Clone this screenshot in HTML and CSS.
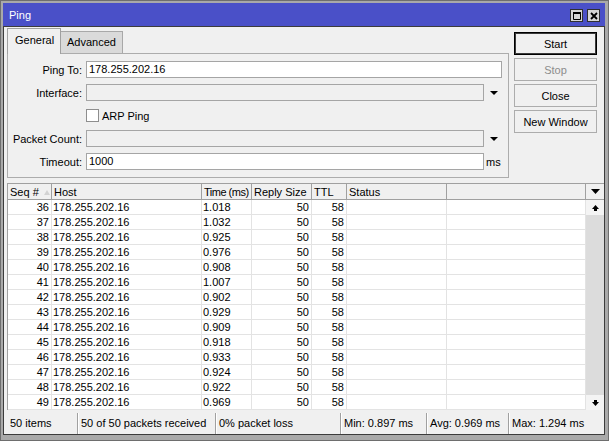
FILE: index.html
```html
<!DOCTYPE html>
<html>
<head>
<meta charset="utf-8">
<title>Ping</title>
<link rel="stylesheet" href="styles.css">
</head>
<body>
<div class="window">
  <div class="titlebar">
    <span class="title">Ping</span>
    <div class="tbtns">
      <span class="tbtn"><svg width="8" height="8" viewBox="0 0 8 8"><rect x="0" y="0" width="8" height="2" fill="#000"/><path d="M0.5 1.5V7.5H7.5V1.5" fill="none" stroke="#000"/></svg></span>
      <span class="tbtn"><svg width="8" height="8" viewBox="0 0 8 8"><path d="M1 1L7 7M7 1L1 7" stroke="#000" stroke-width="1.8" fill="none"/></svg></span>
    </div>
  </div>
  <div class="body">
    <div class="top">
      <div class="tabs-area">
        <div class="tabstrip">
          <div class="tab active">General</div>
          <div class="tab adv">Advanced</div>
        </div>
        <div class="panel">
          <div class="form">
            <span class="lbl">Ping To:</span>
            <div class="input span2">178.255.202.16</div>

            <span class="lbl">Interface:</span>
            <div class="input dis"></div>
            <span class="arrow"><svg width="8" height="4" viewBox="0 0 8 4"><path d="M0 0H8L4 4Z" fill="#000"/></svg></span>

            <span></span>
            <div class="check"><span class="cb"></span><span>ARP Ping</span></div>

            <span class="lbl">Packet Count:</span>
            <div class="input dis"></div>
            <span class="arrow"><svg width="8" height="4" viewBox="0 0 8 4"><path d="M0 0H8L4 4Z" fill="#000"/></svg></span>

            <span class="lbl">Timeout:</span>
            <div class="input">1000</div>
            <span class="suffix">ms</span>
          </div>
        </div>
      </div>
      <div class="buttons">
        <div class="btn def">Start</div>
        <div class="btn disabled">Stop</div>
        <div class="btn">Close</div>
        <div class="btn">New Window</div>
      </div>
    </div>

    <div class="list">
      <div class="thead">
        <div class="th">Seq # <svg class="sort" width="6" height="5" viewBox="0 0 6 5"><path d="M3 0L6 5H0Z" fill="#d2d2d2"/></svg></div>
        <div class="th">Host</div>
        <div class="th tight">Time (ms)</div>
        <div class="th">Reply Size</div>
        <div class="th">TTL</div>
        <div class="th">Status</div>
        <div class="th"></div>
        <div class="th menu"><svg width="9" height="5" viewBox="0 0 9 5"><path d="M0 0H9L4.5 5Z" fill="#000"/></svg></div>
      </div>
      <div class="tbody">
        <div class="rows">
          <div class="row"><div class="td r">36</div><div class="td">178.255.202.16</div><div class="td">1.018</div><div class="td r">50</div><div class="td r">58</div><div class="td"></div><div class="td"></div></div>
          <div class="row"><div class="td r">37</div><div class="td">178.255.202.16</div><div class="td">1.032</div><div class="td r">50</div><div class="td r">58</div><div class="td"></div><div class="td"></div></div>
          <div class="row"><div class="td r">38</div><div class="td">178.255.202.16</div><div class="td">0.925</div><div class="td r">50</div><div class="td r">58</div><div class="td"></div><div class="td"></div></div>
          <div class="row"><div class="td r">39</div><div class="td">178.255.202.16</div><div class="td">0.976</div><div class="td r">50</div><div class="td r">58</div><div class="td"></div><div class="td"></div></div>
          <div class="row"><div class="td r">40</div><div class="td">178.255.202.16</div><div class="td">0.908</div><div class="td r">50</div><div class="td r">58</div><div class="td"></div><div class="td"></div></div>
          <div class="row"><div class="td r">41</div><div class="td">178.255.202.16</div><div class="td">1.007</div><div class="td r">50</div><div class="td r">58</div><div class="td"></div><div class="td"></div></div>
          <div class="row"><div class="td r">42</div><div class="td">178.255.202.16</div><div class="td">0.902</div><div class="td r">50</div><div class="td r">58</div><div class="td"></div><div class="td"></div></div>
          <div class="row"><div class="td r">43</div><div class="td">178.255.202.16</div><div class="td">0.929</div><div class="td r">50</div><div class="td r">58</div><div class="td"></div><div class="td"></div></div>
          <div class="row"><div class="td r">44</div><div class="td">178.255.202.16</div><div class="td">0.909</div><div class="td r">50</div><div class="td r">58</div><div class="td"></div><div class="td"></div></div>
          <div class="row"><div class="td r">45</div><div class="td">178.255.202.16</div><div class="td">0.918</div><div class="td r">50</div><div class="td r">58</div><div class="td"></div><div class="td"></div></div>
          <div class="row"><div class="td r">46</div><div class="td">178.255.202.16</div><div class="td">0.933</div><div class="td r">50</div><div class="td r">58</div><div class="td"></div><div class="td"></div></div>
          <div class="row"><div class="td r">47</div><div class="td">178.255.202.16</div><div class="td">0.924</div><div class="td r">50</div><div class="td r">58</div><div class="td"></div><div class="td"></div></div>
          <div class="row"><div class="td r">48</div><div class="td">178.255.202.16</div><div class="td">0.922</div><div class="td r">50</div><div class="td r">58</div><div class="td"></div><div class="td"></div></div>
          <div class="row"><div class="td r">49</div><div class="td">178.255.202.16</div><div class="td">0.969</div><div class="td r">50</div><div class="td r">58</div><div class="td"></div><div class="td"></div></div>
        </div>
        <div class="vscroll">
          <div class="sbtn"><svg width="7" height="6" viewBox="0 0 7 6"><path d="M3.5 0L7 4H5V6H2V4H0Z" fill="#000"/></svg></div>
          <div class="track"></div>
          <div class="sbtn"><svg width="7" height="6" viewBox="0 0 7 6"><path d="M3.5 6L7 2H5V0H2V2H0Z" fill="#000"/></svg></div>
        </div>
      </div>
    </div>

    <div class="status">
      <div class="sec">50 items</div>
      <div class="sec">50 of 50 packets received</div>
      <div class="sec">0% packet loss</div>
      <div class="sec">Min: 0.897 ms</div>
      <div class="sec">Avg: 0.969 ms</div>
      <div class="sec">Max: 1.294 ms</div>
    </div>
  </div>
</div>
</body>
</html>
```
FILE: styles.css
```css
html, body {
  margin: 0;
  padding: 0;
}
body {
  font-family: "Liberation Sans", Arial, sans-serif;
  font-size: 11px;
  color: #000;
  background: #a9a9a9;
}
.window {
  width: 609px;
  height: 441px;
  box-sizing: border-box;
  border: 1px solid #6e6e6e;
  padding: 2px 3px 5px 2px;
  background: #a9a9a9;
  display: flex;
  flex-direction: column;
}
.titlebar {
  height: 23px;
  flex: none;
  background: #4a50c8;
  display: flex;
  align-items: flex-start;
  justify-content: space-between;
  padding: 0 5px 0 6px;
}
.title {
  color: #fff;
  margin-top: 6px;
  line-height: 13px;
}
.tbtns {
  display: flex;
  gap: 4px;
  margin-top: 6px;
}
.tbtn {
  width: 13px;
  height: 13px;
  box-sizing: border-box;
  border: 1px solid #303030;
  background: #d6d6d6;
  display: flex;
  align-items: center;
  justify-content: center;
}
.body {
  flex: 1;
  min-height: 0;
  border: 1px solid #3c3c3c;
  background: #f0f0f0;
  padding: 1px 0 0 3px;
  display: flex;
  flex-direction: column;
}
.top {
  height: 150px;
  flex: none;
  display: flex;
}
.tabs-area {
  width: 502px;
  display: flex;
  flex-direction: column;
}
.tabstrip {
  height: 25px;
  flex: none;
  display: flex;
  align-items: flex-end;
}
.tab {
  box-sizing: border-box;
  line-height: 13px;
  white-space: nowrap;
}
.tab.active {
  width: 54px;
  height: 26px;
  margin-bottom: -1px;
  border: 1px solid #a0a0a0;
  border-bottom: none;
  background: #f0f0f0;
  padding: 5px 0 0 7px;
  position: relative;
  z-index: 1;
}
.tab.adv {
  width: 62px;
  height: 22px;
  border: 1px solid #a8a8a8;
  border-left: none;
  border-bottom: none;
  background: #dadada;
  padding: 4px 0 0 6px;
}
.panel {
  flex: 1;
  border: 1px solid #acacac;
  background: #f0f0f0;
  padding: 7px 6px 0 0;
}
.form {
  display: grid;
  grid-template-columns: 78px 1fr 18px;
  grid-auto-rows: 17px;
  row-gap: 6px;
  align-items: center;
}
.lbl {
  text-align: right;
  padding-right: 4px;
  white-space: nowrap;
}
.input {
  height: 17px;
  box-sizing: border-box;
  border: 1px solid #a5a5a5;
  background: #fff;
  padding-left: 2px;
  line-height: 15px;
}
.input.span2 {
  grid-column: 2 / 4;
}
.input.dis {
  background: #f0f0f0;
}
.arrow {
  display: flex;
  justify-content: center;
  padding-left: 2px;
}
.suffix {
  padding-left: 2px;
}
.check {
  grid-column: 2 / 4;
  display: flex;
  align-items: center;
  gap: 3px;
}
.cb {
  width: 13px;
  height: 13px;
  box-sizing: border-box;
  border: 1px solid #8e8e8e;
  background: #fff;
}
.buttons {
  width: 83px;
  margin-left: 5px;
  margin-top: 4px;
  display: flex;
  flex-direction: column;
  gap: 3px;
}
.btn {
  height: 23px;
  box-sizing: border-box;
  border: 1px solid #acacac;
  background: #f0f0f0;
  display: flex;
  align-items: center;
  justify-content: center;
  white-space: nowrap;
}
.btn.def {
  border-color: #000;
  box-shadow: inset 0 0 0 1px #3a3a3a;
}
.btn.disabled {
  color: #8d8d8d;
}
.list {
  margin-top: 5px;
  height: 227px;
  flex: none;
  box-sizing: border-box;
  border-left: 1px solid #a0a0a0;
  border-top: 1px solid #a0a0a0;
  background: #fff;
  display: flex;
  flex-direction: column;
}
.thead {
  display: grid;
  grid-template-columns: 44px 150px 50px 60px 35px 100px 1fr 18px;
  height: 16px;
  flex: none;
  box-sizing: border-box;
  border-bottom: 1px solid #a0a0a0;
  background: #f0f0f0;
}
.th {
  border-right: 1px solid #a0a0a0;
  padding-left: 2px;
  line-height: 16px;
  white-space: nowrap;
  overflow: hidden;
}
.th.tight {
  letter-spacing: -0.5px;
}
.th .sort {
  margin-left: 2px;
  vertical-align: 1px;
}
.th.menu {
  border-right: none;
  padding-left: 0;
  display: flex;
  align-items: center;
  justify-content: center;
}
.tbody {
  flex: 1;
  min-height: 0;
  display: flex;
}
.rows {
  flex: 1;
}
.row {
  display: grid;
  grid-template-columns: 44px 150px 50px 60px 35px 100px 1fr;
  height: 15px;
  box-sizing: border-box;
  border-bottom: 1px solid #e3e3e3;
}
.td {
  border-right: 1px solid #e3e3e3;
  line-height: 15px;
  padding: 0 2px 0 1px;
  white-space: nowrap;
  overflow: hidden;
}
.td.r {
  text-align: right;
  padding: 0 2px 0 0;
}
.vscroll {
  width: 18px;
  display: flex;
  flex-direction: column;
  background: #dcdcdc;
}
.sbtn {
  height: 15px;
  flex: none;
  background: #f4f4f4;
  display: flex;
  align-items: center;
  justify-content: center;
}
.track {
  flex: 1;
  background: #dcdcdc;
}
.status {
  margin-top: 3px;
  height: 21px;
  flex: none;
  display: grid;
  grid-template-columns: 70px 138px 125px 86px 82px 1fr;
}
.sec {
  border-left: 1px solid #a0a0a0;
  box-shadow: inset 1px 0 0 #ffffff;
  padding-left: 3px;
  line-height: 21px;
  white-space: nowrap;
  overflow: hidden;
}
.sec:first-child {
  border-left: none;
  box-shadow: none;
}
```
